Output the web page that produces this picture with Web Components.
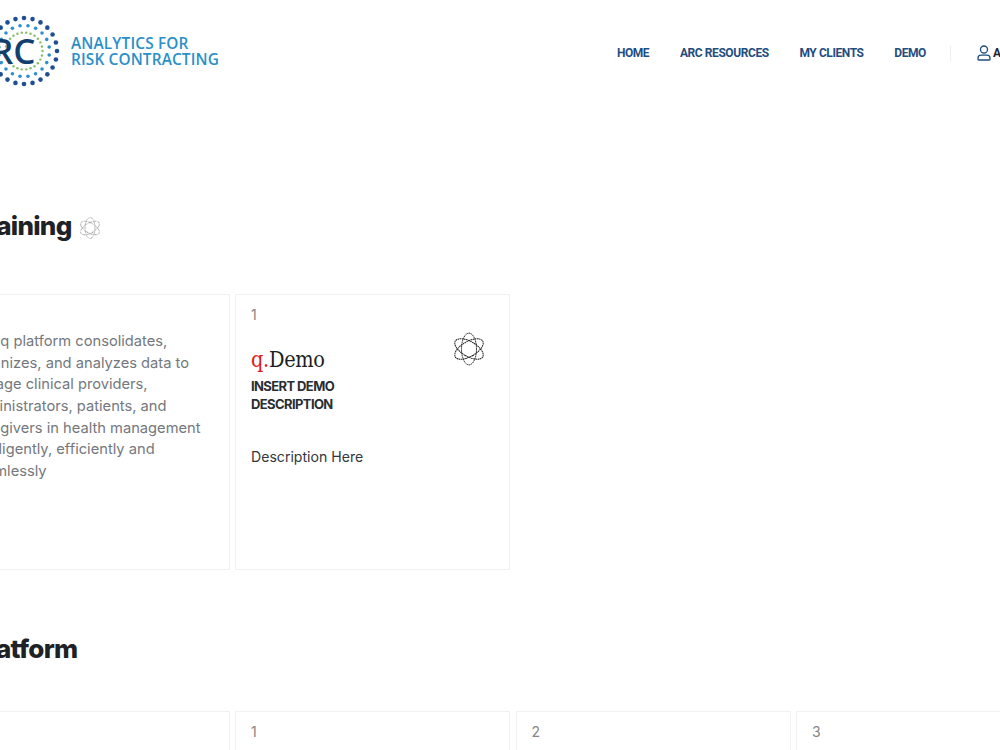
<!DOCTYPE html>
<html lang="en"><head><meta charset="utf-8"><title>ARC</title>
<style>
html,body{margin:0;padding:0;background:#fff;overflow:hidden;width:1000px;height:750px}
body{font-family:Inter,"Liberation Sans",sans-serif}
</style></head><body>
<arc-page>
  <arc-header slot="header"></arc-header>
  <arc-section title-text="Training" with-icon>
    <arc-card><p class="t">The q platform consolidates, organizes, and analyzes data to engage clinical providers, administrators, patients, and caregivers in health management intelligently, efficiently and seamlessly</p></arc-card>
    <arc-demo-card num="1"></arc-demo-card>
  </arc-section>
  <arc-section title-text="Platform" class="second">
    <arc-card></arc-card>
    <arc-card num="1"></arc-card>
    <arc-card num="2"></arc-card>
    <arc-card num="3"></arc-card>
  </arc-section>
</arc-page>
<script>
function def(name, html, init){
  customElements.define(name, class extends HTMLElement{
    constructor(){super();this.attachShadow({mode:'open'}).innerHTML=html;}
    connectedCallback(){ if(init) init(this,this.shadowRoot); }
  });
}
const atom=(dash,col,sw)=>`<svg viewBox="0 0 36 40" width="100%" height="100%" fill="none" stroke="${col}" stroke-width="${sw}" stroke-dasharray="${dash}">
<ellipse cx="18" cy="20" rx="9" ry="19"/><ellipse cx="18" cy="20" rx="9" ry="19" transform="rotate(60 18 20)"/><ellipse cx="18" cy="20" rx="9" ry="19" transform="rotate(120 18 20)"/></svg>`;

def('arc-page',`<style>:host{display:block;margin-left:-45.5px;width:1200px}</style><slot name="header"></slot><slot></slot>`);

def('arc-logo',`<style>:host{display:flex;align-items:center;gap:9px;margin-left:31.5px}
svg{display:block;flex:none}
.w{font:600 15.4px/16.5px "Open Sans",sans-serif;color:#2b90c9;letter-spacing:.14px;white-space:nowrap;padding-top:2px}
.w div{white-space:nowrap}</style>
<svg id="s" width="76" height="76" viewBox="0 0 76 76"></svg>
<div class="w"><div>ANALYTICS FOR</div><div>RISK CONTRACTING</div></div>`,(el,r)=>{
  const rings=[[33,24,2.3,'#1f4f93',0],[25.5,20,1.8,'#2f8fca',.5],[18.5,26,1.2,'#86bd63',0]];
  let o='';
  rings.forEach(([R,n,d,c,off])=>{for(let i=0;i<n;i++){const a=(i+off)/n*Math.PI*2;
    o+=`<circle cx="${(38+R*Math.cos(a)).toFixed(2)}" cy="${(38+R*Math.sin(a)).toFixed(2)}" r="${d}" fill="${c}"/>`}});
  o+=`<text x="49.5" y="51" text-anchor="end" font-family="Open Sans" font-weight="600" font-size="35" fill="#123f6e">ARC</text>`;
  r.getElementById('s').innerHTML=o;
});

def('arc-nav-link',`<style>:host{display:block;font:700 12px/16px Roboto,sans-serif;color:#1f4e7f;letter-spacing:-.42px;white-space:nowrap}</style><slot></slot>`);

def('arc-header',`<style>:host{display:flex;align-items:center;height:102px;width:1100px;box-sizing:border-box}
nav{display:flex;align-items:center;gap:30.7px;margin-right:6px;margin-left:auto;margin-top:4px}
.sep{width:1px;height:15px;background:#eceff1;margin:0 -4.7px 0 -6.7px}
.u{display:flex;align-items:center;gap:2px}
.u svg{display:block}
.u b{font:700 12px/16px Roboto,sans-serif;color:#1d2733}</style>
<arc-logo></arc-logo>
<nav><arc-nav-link>HOME</arc-nav-link><arc-nav-link>ARC RESOURCES</arc-nav-link><arc-nav-link>MY CLIENTS</arc-nav-link><arc-nav-link>DEMO</arc-nav-link>
<div class="sep"></div>
<div class="u"><svg width="14" height="16" viewBox="0 0 14 16" fill="none" stroke="#1f4e7f" stroke-width="1.3"><circle cx="7" cy="4.5" r="3.5"/><path d="M1 14.4v-1.2a3 3 0 0 1 3-3h6a3 3 0 0 1 3 3v1.2a.6.6 0 0 1-.6.6H1.6a.6.6 0 0 1-.6-.6z"/></svg><b>ACCOUNT</b></div></nav>`);

def('arc-section',`<style>:host{display:block}
.h{display:flex;align-items:center;gap:8px;height:30px;margin:109px 0 53px 16.5px;font:800 26px/30px Inter,sans-serif;color:#1e2227;letter-spacing:-.7px;white-space:nowrap}
:host(.second) .h{margin:64px 0 47px 18.5px}
.i{width:20px;height:22px;display:none}
:host([with-icon]) .i{display:block}
.g{display:grid;grid-template-columns:repeat(4,275px);column-gap:5.5px}</style>
<div class="h"><span id="t"></span><span class="i">${atom('.9 1.5','#444',1.4)}</span></div>
<div class="g"><slot></slot></div>`,(el,r)=>{r.getElementById('t').textContent=el.getAttribute('title-text');});

def('arc-card',`<style>:host{display:block;box-sizing:border-box;height:276px;border:1px solid #f1f1f1;padding:12px 15px;background:#fff}
.n{font:400 14px/16px Inter,sans-serif;color:#858585;height:16px}
::slotted(p.t){margin:8px 0 0 -1px;font:400 14.7px/21.65px Inter,sans-serif;color:#74787d;width:240px}</style>
<div class="n" id="n"></div><slot></slot>`,(el,r)=>{r.getElementById('n').textContent=el.getAttribute('num')||'';});

def('arc-demo-card',`<style>:host{display:block;box-sizing:border-box;height:276px;border:1px solid #f1f1f1;padding:12px 15px;background:#fff;position:relative}
.n{font:400 14px/16px Inter,sans-serif;color:#858585;height:16px}
.q{font:400 21.5px/28px "DejaVu Serif Condensed","DejaVu Serif",serif;margin-top:23px;color:#1b1f24;letter-spacing:-.3px}
.q i{font-style:normal;color:#e01b1b}
.d{font:700 13px/18px Inter,sans-serif;color:#2a2e33;letter-spacing:-.6px;margin-top:3px;width:110px}
.x{font:400 14.1px/18px Inter,sans-serif;color:#33373c;margin-top:35px}
.a{position:absolute;top:37px;right:25px;width:30px;height:34px}</style>
<div class="n">1</div><div class="q"><i>q.</i>Demo</div>
<div class="d">INSERT DEMO DESCRIPTION</div><div class="x">Description Here</div>
<div class="a">${atom('2 .6','#222',1.2)}</div>`,(el,r)=>{r.querySelector('.n').textContent=el.getAttribute('num')||'';});
</script>
</body></html>
